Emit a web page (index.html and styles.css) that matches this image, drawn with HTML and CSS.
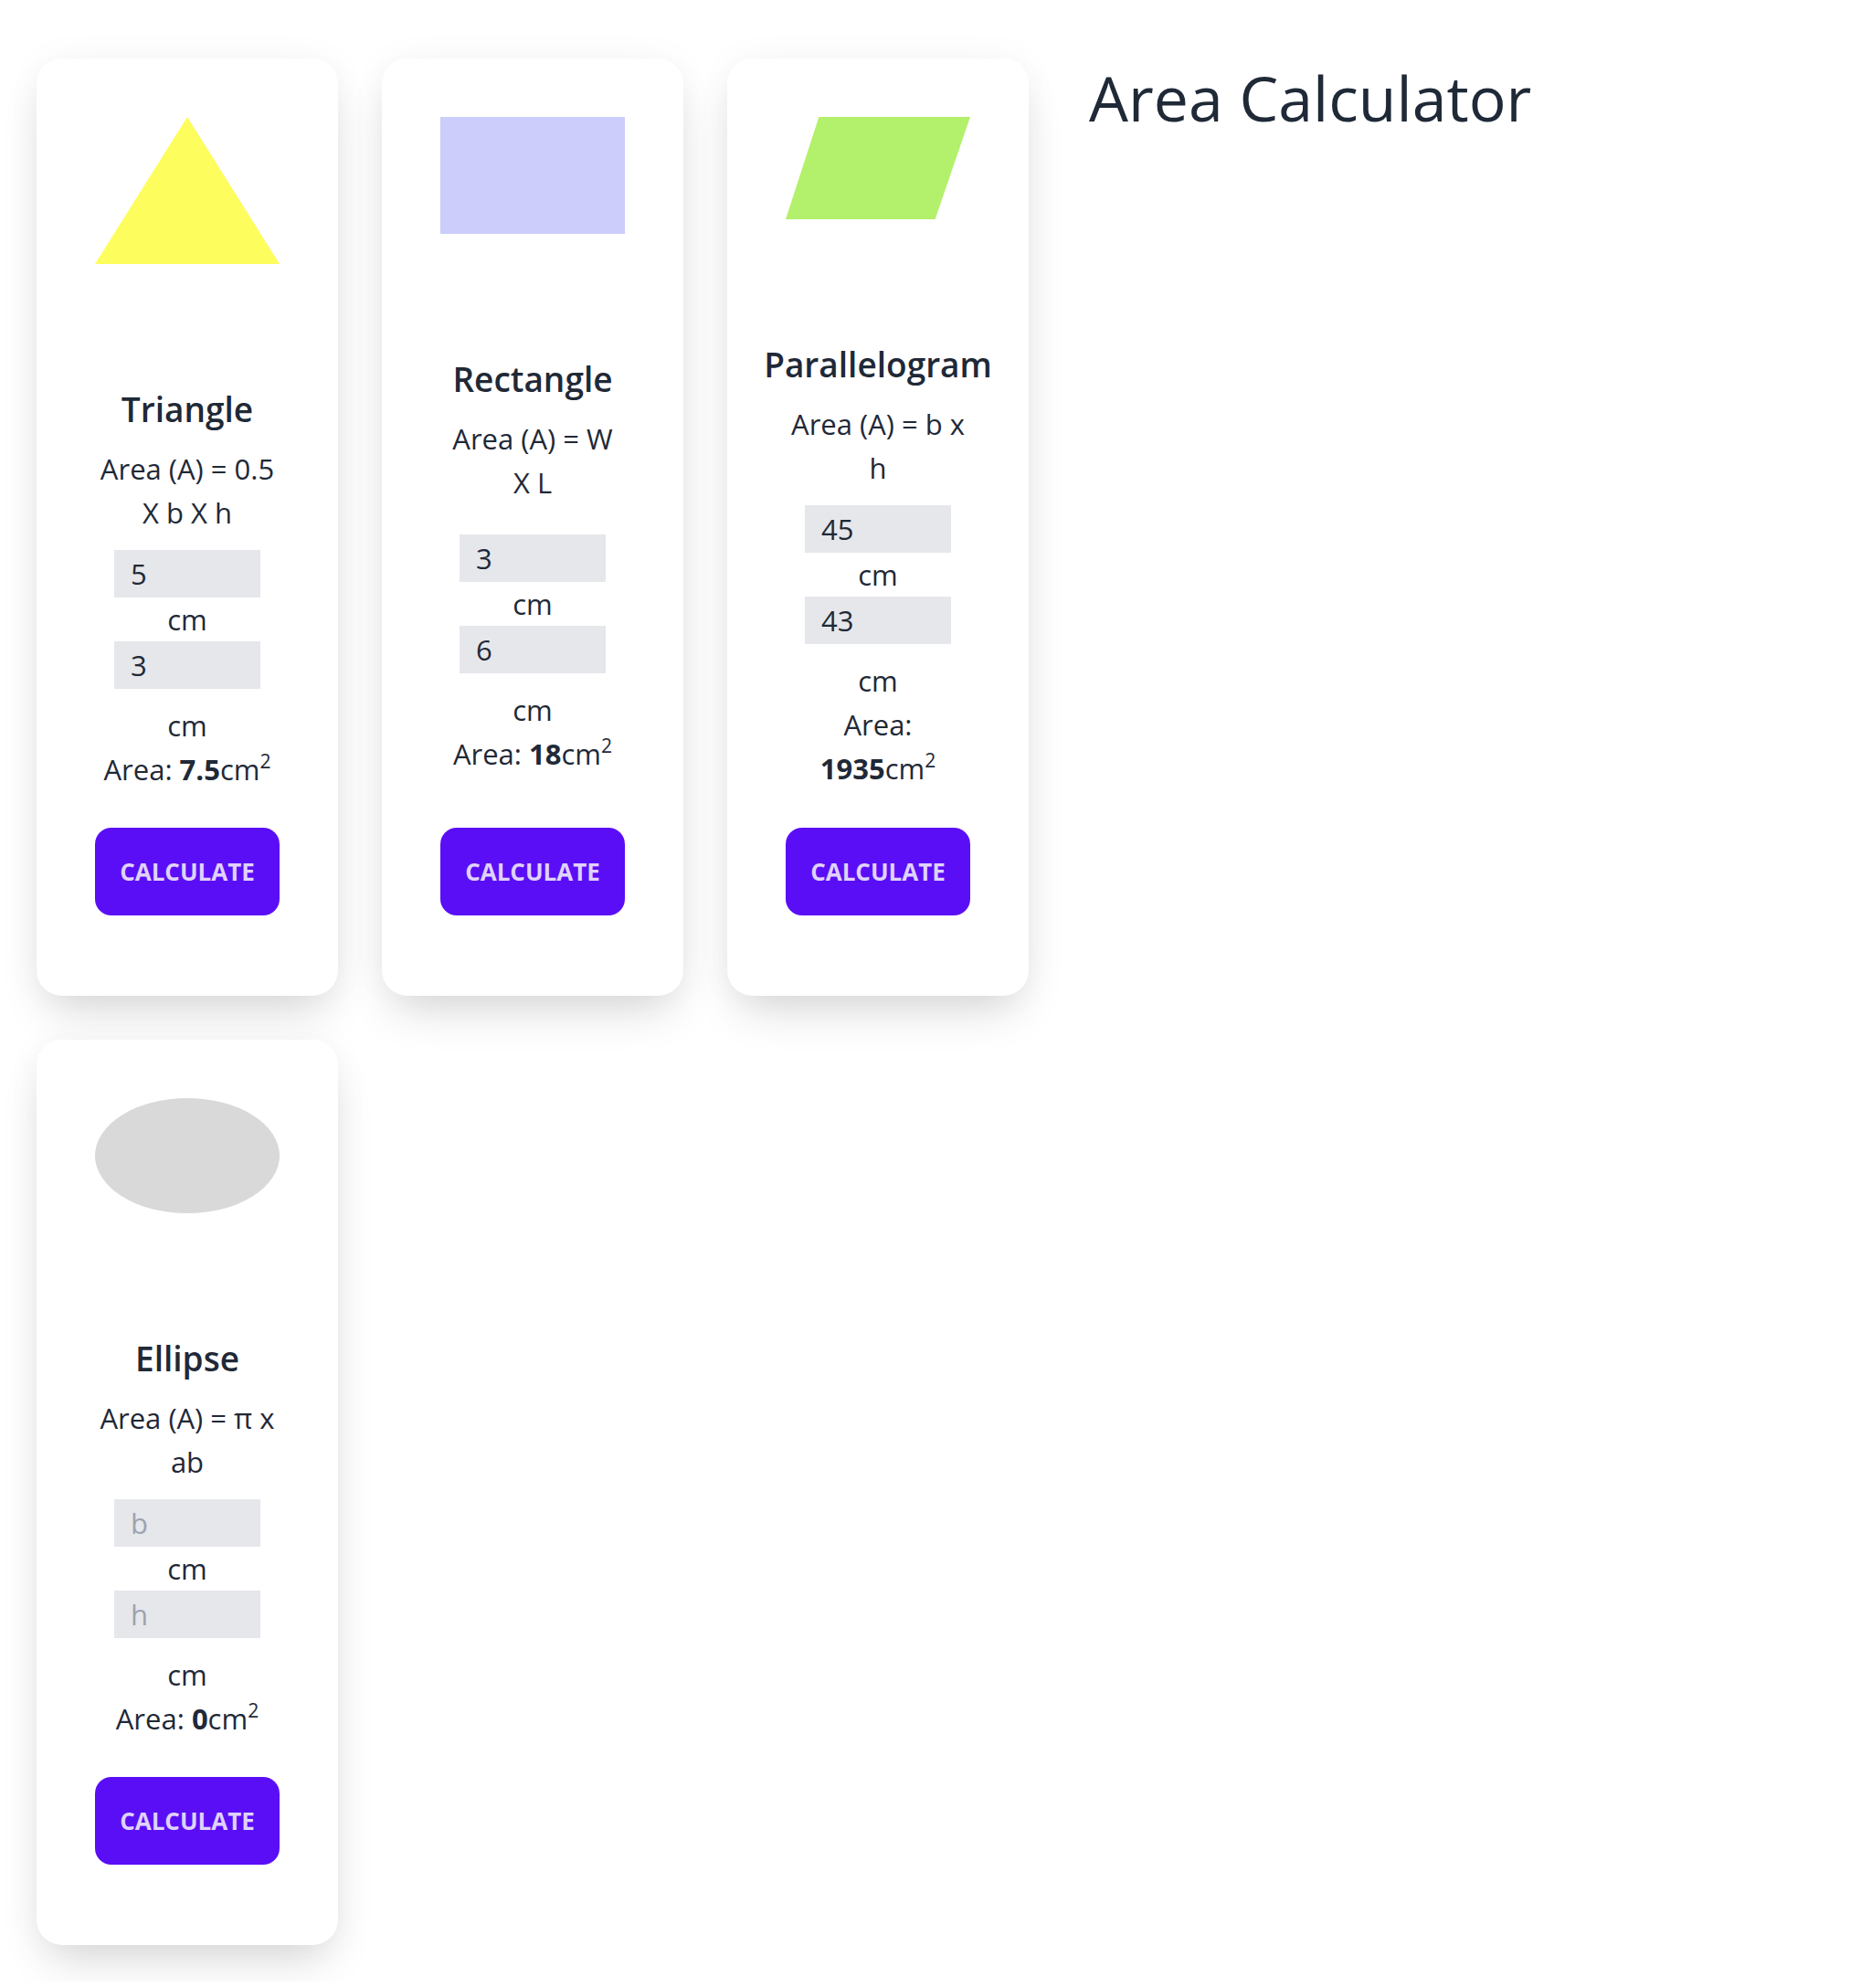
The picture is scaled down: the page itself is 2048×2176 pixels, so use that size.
FILE: index.html
```html
<!DOCTYPE html>
<html lang="en">
<head>
<meta charset="utf-8">
<title>Area Calculator</title>
<link rel="stylesheet" href="styles.css">
</head>
<body>
<main class="page">
  <section class="cards">
    <article class="card">
      <div class="shape shape-triangle"></div>
      <h2 class="card-title">Triangle</h2>
      <p class="formula">Area (A) = 0.5<br>X b X h</p>
      <input class="field" type="text" value="5" placeholder="b">
      <span class="unit">cm</span>
      <input class="field" type="text" value="3" placeholder="h">
      <span class="unit unit-last">cm</span>
      <p class="result">Area: <strong>7.5</strong>cm<sup>2</sup></p>
      <button class="calc-btn" type="button">Calculate</button>
    </article>
    <article class="card">
      <div class="shape shape-rectangle"></div>
      <h2 class="card-title">Rectangle</h2>
      <p class="formula formula-spaced">Area (A) = W<br>X L</p>
      <input class="field" type="text" value="3" placeholder="w">
      <span class="unit">cm</span>
      <input class="field" type="text" value="6" placeholder="l">
      <span class="unit unit-last">cm</span>
      <p class="result">Area: <strong>18</strong>cm<sup>2</sup></p>
      <button class="calc-btn" type="button">Calculate</button>
    </article>
    <article class="card">
      <div class="shape shape-parallelogram"></div>
      <h2 class="card-title">Parallelogram</h2>
      <p class="formula">Area (A) = b x<br>h</p>
      <input class="field" type="text" value="45" placeholder="b">
      <span class="unit">cm</span>
      <input class="field" type="text" value="43" placeholder="h">
      <span class="unit unit-last">cm</span>
      <p class="result">Area:<br><strong>1935</strong>cm<sup>2</sup></p>
      <button class="calc-btn" type="button">Calculate</button>
    </article>
    <article class="card">
      <div class="shape shape-ellipse"></div>
      <h2 class="card-title">Ellipse</h2>
      <p class="formula">Area (A) = π x<br>ab</p>
      <input class="field" type="text" value="" placeholder="b">
      <span class="unit">cm</span>
      <input class="field" type="text" value="" placeholder="h">
      <span class="unit unit-last">cm</span>
      <p class="result">Area: <strong>0</strong>cm<sup>2</sup></p>
      <button class="calc-btn" type="button">Calculate</button>
    </article>
  </section>
  <h1 class="page-title">Area Calculator</h1>
</main>
</body>
</html>
```

FILE: styles.css
```css
* {
  box-sizing: border-box;
}

body {
  margin: 0;
  background: #ffffff;
  color: #1f2937;
  font-family: "Open Sans", "Noto Sans", sans-serif;
}

.page {
  display: flex;
  align-items: flex-start;
  gap: 66px;
  padding: 64px 0 40px 40px;
}

.cards {
  display: grid;
  grid-template-columns: repeat(3, 330px);
  gap: 48px;
}

.card {
  display: flex;
  flex-direction: column;
  align-items: center;
  padding: 64px 64px 88px;
  background: #ffffff;
  border-radius: 28px;
  box-shadow: 0 25px 50px -12px rgba(0, 0, 0, 0.16), 0 0 40px rgba(0, 0, 0, 0.04);
  text-align: center;
  font-size: 31px;
  line-height: 48px;
}

.shape {
  width: 202px;
  margin-bottom: 135px;
  flex-shrink: 0;
}

.shape-triangle {
  height: 161px;
  background: #fdfd5e;
  clip-path: polygon(50% 0, 100% 100%, 0 100%);
}

.shape-rectangle {
  height: 128px;
  background: #cccdfb;
}

.shape-parallelogram {
  height: 112px;
  background: #b3f06b;
  clip-path: polygon(18% 0, 100% 0, 81% 100%, 0 100%);
}

.shape-ellipse {
  height: 126px;
  background: #d9d9d9;
  border-radius: 50%;
}

.card-title {
  margin: 0 0 17px;
  font-size: 37px;
  line-height: 48px;
  font-weight: 600;
}

.formula {
  margin: 0 0 17px;
}

.formula-spaced {
  margin-bottom: 33px;
}

.field {
  width: 160px;
  height: 52px;
  padding: 0 18px;
  border: none;
  border-radius: 0;
  background: #e5e7eb;
  color: #1f2937;
  font: inherit;
  line-height: 52px;
  outline: none;
}

.field::placeholder {
  color: #9ca3af;
}

.unit {
  display: block;
}

.unit-last {
  margin-top: 16px;
}

.result {
  margin: 0 0 40px;
}

.result strong {
  font-weight: 700;
}

.result sup {
  font-size: 0.68em;
  line-height: 0;
  vertical-align: 0.62em;
}

.calc-btn {
  width: 100%;
  height: 96px;
  margin-top: auto;
  border: none;
  border-radius: 18px;
  background: #5a0ef6;
  color: #e0d2fd;
  font-family: inherit;
  font-size: 26px;
  font-weight: 700;
  text-transform: uppercase;
  cursor: pointer;
}

.page-title {
  margin: 0;
  font-size: 68px;
  line-height: 86px;
  font-weight: 400;
  white-space: nowrap;
}
```
